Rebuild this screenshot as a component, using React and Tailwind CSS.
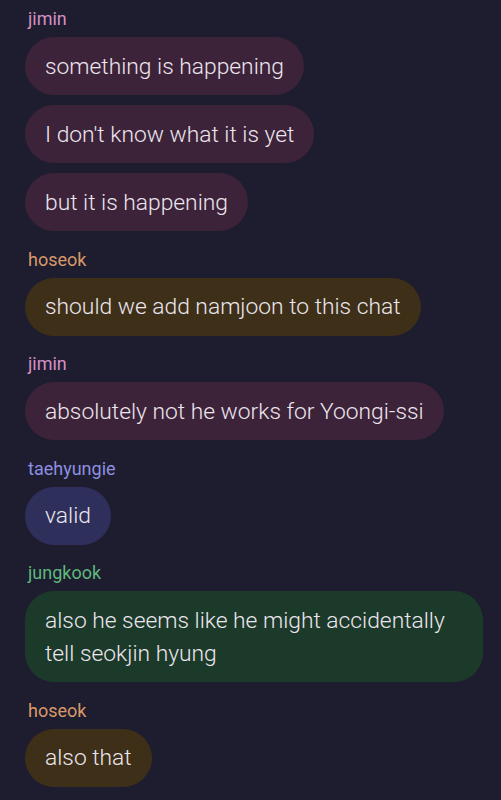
const groups = [
  {
    name: 'jimin',
    nameColor: 'text-[#d58fc4]',
    bubble: 'bg-[#3d2339]',
    messages: ['something is happening', "I don't know what it is yet", 'but it is happening'],
  },
  {
    name: 'hoseok',
    nameColor: 'text-[#d8996a]',
    bubble: 'bg-[#3e3018]',
    messages: ['should we add namjoon to this chat'],
  },
  {
    name: 'jimin',
    nameColor: 'text-[#d58fc4]',
    bubble: 'bg-[#3d2339]',
    messages: ['absolutely not he works for Yoongi-ssi'],
  },
  {
    name: 'taehyungie',
    nameColor: 'text-[#8b90e0]',
    bubble: 'bg-[#2e2f5a]',
    messages: ['valid'],
  },
  {
    name: 'jungkook',
    nameColor: 'text-[#5cb97b]',
    bubble: 'bg-[#1c3a29]',
    messages: ['also he seems like he might accidentally tell seokjin hyung'],
  },
  {
    name: 'hoseok',
    nameColor: 'text-[#d8996a]',
    bubble: 'bg-[#3e3018]',
    messages: ['also that'],
  },
]

export default function App() {
  return (
    <div
      className="w-[501px] h-[800px] overflow-hidden bg-[#1e1c2f] pl-[25px] pr-[18px] pt-[7px]"
      style={{ fontFamily: 'Roboto, "Noto Sans", sans-serif' }}
    >
      {groups.map((g, i) => (
        <div key={i} className={i === 0 ? '' : 'mt-[16.5px]'}>
          <p className={`${g.nameColor} text-[18px] leading-[24px] pl-[3px] mb-[6px]`}>{g.name}</p>
          <div className="flex flex-col items-start gap-[10px]">
            {g.messages.map((m, j) => (
              <div
                key={j}
                className={`${g.bubble} rounded-[29px] px-[20px] py-[12.5px] text-[22.8px] leading-[33px] font-light text-[#ece6ef]`}
              >
                {m}
              </div>
            ))}
          </div>
        </div>
      ))}
    </div>
  )
}
